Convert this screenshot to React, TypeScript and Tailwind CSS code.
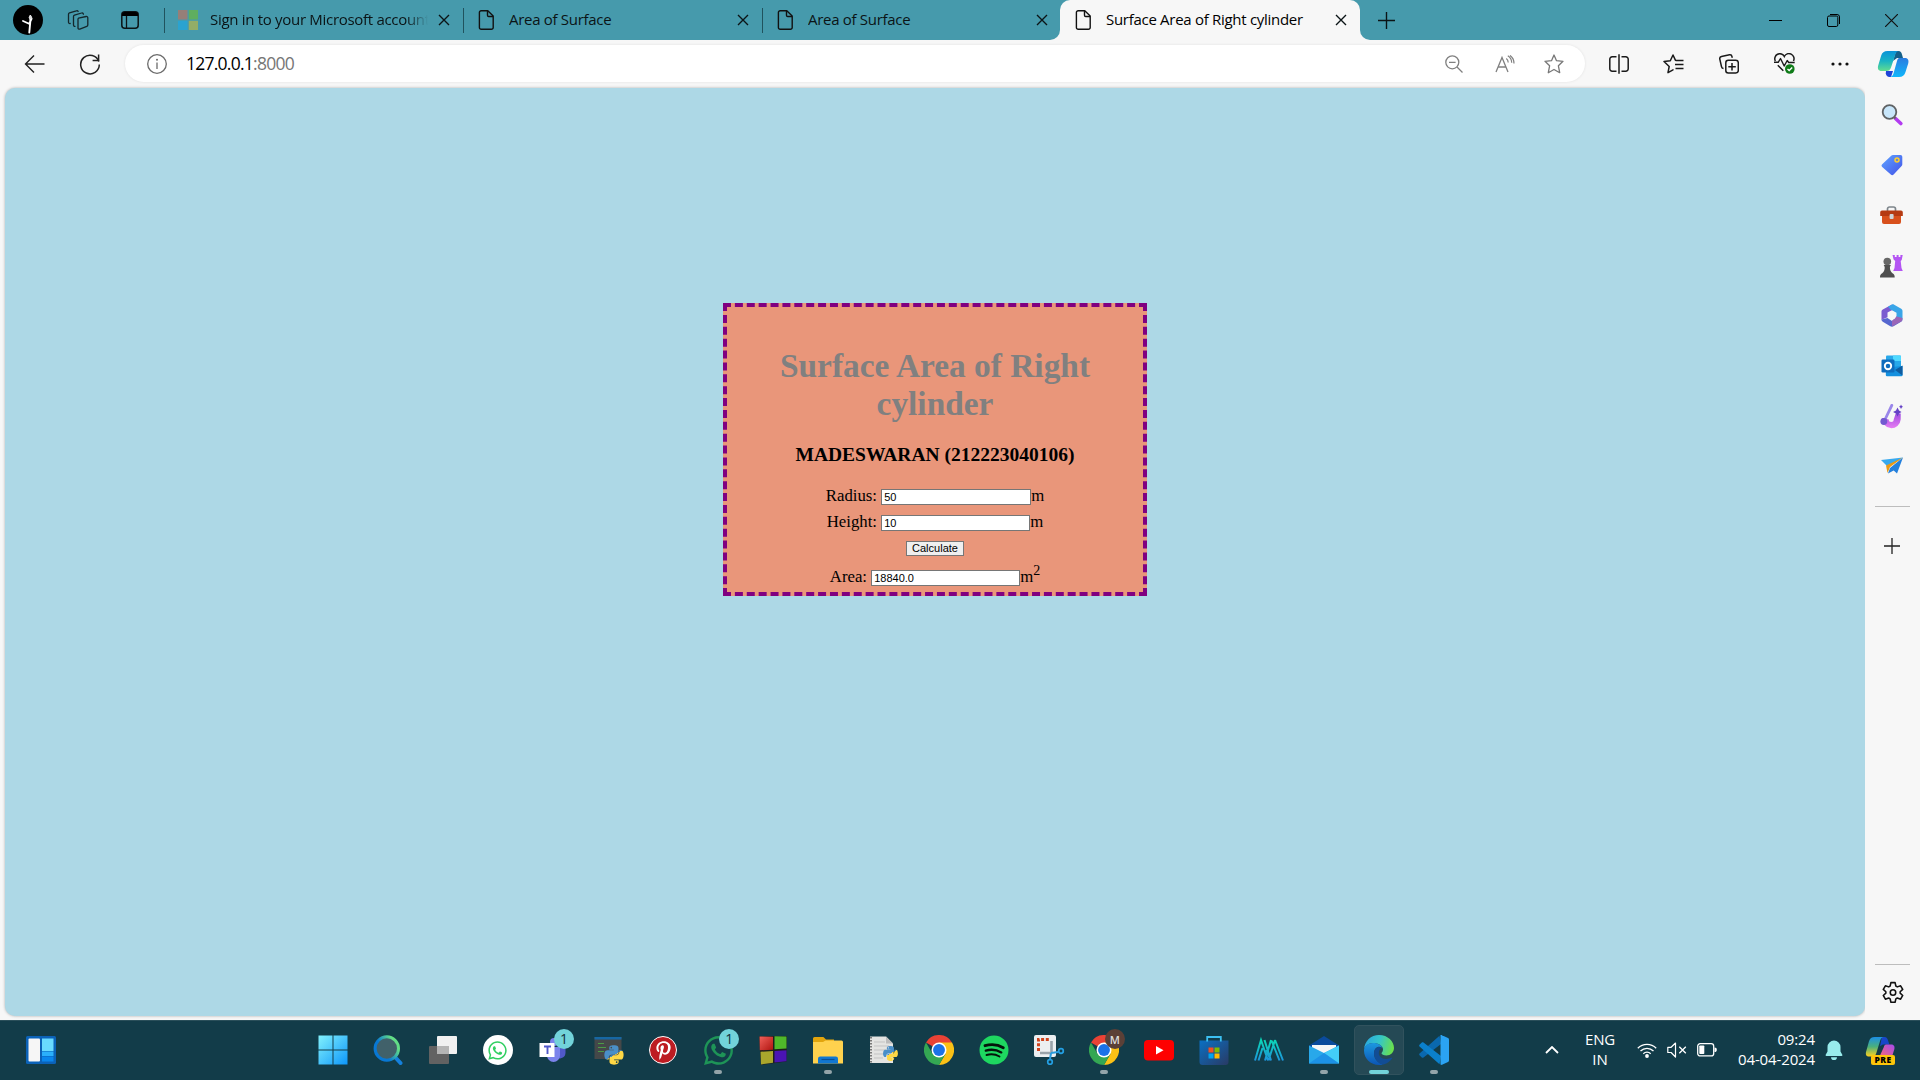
import React from "react";
import { FaWhatsapp, FaPython, FaPinterestP } from "react-icons/fa";

type SvgProps = { w?: number; h?: number; vb: string; children: React.ReactNode; className?: string };

function Svg({ w = 30, h = 30, vb, children, className }: SvgProps) {
  return (
    <svg width={w} height={h} viewBox={vb} fill="none" className={className ?? "block shrink-0"}>
      {children}
    </svg>
  );
}

/* ---------- browser chrome icons ---------- */

const Close = () => (
  <Svg w={12} h={12} vb="0 0 12 12">
    <path d="M1 1 11 11M11 1 1 11" stroke="#0b1416" strokeWidth="1.4" />
  </Svg>
);

const Doc = () => (
  <Svg w={20} h={20} vb="0 0 20 20">
    <path
      d="M4.2.8h6.6L16.2 6v11.4a1.8 1.8 0 0 1-1.8 1.8H4.2a1.8 1.8 0 0 1-1.8-1.8V2.6A1.8 1.8 0 0 1 4.2.8Z"
      stroke="#111"
      strokeWidth="1.4"
      strokeLinejoin="round"
    />
    <path d="M10.5 1v4.3a1.2 1.2 0 0 0 1.2 1.2H16" stroke="#111" strokeWidth="1.4" />
  </Svg>
);

const MsLogo = () => (
  <Svg w={20} h={20} vb="0 0 20 20">
    <path fill="#967f78" d="M0 0h9.5v9.5H0z" />
    <path fill="#5fae5f" d="M10.8 0h9.2v9.5h-9.2z" />
    <path fill="#2aa3d0" d="M0 10.8h9.5V20H0z" />
    <path fill="#93ad67" d="M10.8 10.8h9.2V20h-9.2z" />
  </Svg>
);

const Profile = () => (
  <Svg vb="0 0 30 30">
    <circle cx="15" cy="15" r="15" fill="#000" />
    <path d="M17.3 11v5.5l-1 11M16.6 19l-6.6-3M16.6 18l2-4.500" stroke="#fff" strokeWidth="1.9" strokeLinecap="round" />
    <circle cx="17.400" cy="12.500" r="1.700" fill="#ddd" />
  </Svg>
);

const Workspaces = () => (
  <Svg w={22} h={20} vb="0 0 22 20">
    <g stroke="#14272c" strokeWidth="1.3" strokeLinejoin="round" strokeLinecap="round">
      <path d="m11.500 8.200 7.700-1.700a1.300 1.300 0 0 1 1.600 1.200v7.300a1.500 1.500 0 0 1-1 1.400l-7 2.700a1.300 1.300 0 0 1-1.800-1.200V9.700a1.500 1.500 0 0 1 .5-1.500Z" />
      <path d="M8 16.400a1.400 1.400 0 0 1-1.500-1.500V6.600a1.500 1.500 0 0 1 1-1.400L14.500 3a1.400 1.400 0 0 1 1.900 1.200" />
      <path d="M3.200 13.500a1.400 1.400 0 0 1-1.700-1.400V4.200a1.500 1.500 0 0 1 1-1.400L9.400.8a1.400 1.400 0 0 1 1.700.6" />
    </g>
  </Svg>
);

const TabActions = () => (
  <Svg w={18} h={18} vb="0 0 18 18">
    <rect x=".8" y=".8" width="16.400" height="16.400" rx="3" stroke="#0b1416" strokeWidth="1.500" />
    <path d="M1 3.500A2.500 2.500 0 0 1 3.500 1h11A2.500 2.500 0 0 1 17 3.500V5H1Z" fill="#000" />
    <path d="M5.500 5v12" stroke="#0b1416" strokeWidth="1.300" />
  </Svg>
);

const Back = () => (
  <Svg w={22} h={20} vb="0 0 22 20">
    <path d="M20.500 10H1.500M10 1.500 1.500 10l8.500 8.500" stroke="#222" strokeWidth="1.400" />
  </Svg>
);

const Refresh = () => (
  <Svg w={22} h={22} vb="0 0 22 22">
    <path d="M19.800 8.500A9.300 9.300 0 1 0 20.300 11.500" stroke="#222" strokeWidth="1.500" />
    <path d="M19.600 1.500v6h-6" stroke="#222" strokeWidth="1.500" />
  </Svg>
);

const Info = () => (
  <Svg w={20} h={20} vb="0 0 20 20">
    <circle cx="10" cy="10" r="9.300" stroke="#6b6b6b" strokeWidth="1.300" />
    <path d="M10 8.500V15" stroke="#6b6b6b" strokeWidth="1.300" />
    <circle cx="10" cy="5.800" r="1" fill="#6b6b6b" />
  </Svg>
);

const ZoomOut = () => (
  <Svg w={18} h={18} vb="0 0 18 18">
    <circle cx="7.300" cy="7.300" r="6.500" stroke="#808080" strokeWidth="1.300" />
    <path d="m12 12 5.500 5.500M4 7.300h6.600" stroke="#808080" strokeWidth="1.300" />
  </Svg>
);

const ReadAloud = () => (
  <Svg w={20} h={18} vb="0 0 20 18">
    <path d="M1 17 7 2.500 13 17M3.200 12h7.600" stroke="#808080" strokeWidth="1.300" />
    <path d="M11.300 3.500c1.300 1 1.900 2.300 1.900 4M12.800.8c2.600 1.600 3.900 4 3.900 7M15 .4c2.500 1.800 4 4.600 4 8" stroke="#808080" strokeWidth="1.200" />
  </Svg>
);

const Star = () => (
  <Svg w={20} h={20} vb="0 0 20 20">
    <path
      d="m10 1 2.500 5.700 6.500.6-4.600 4.500 1.300 6.900L10 15.500l-5.700 3.200 1.300-6.900L1 7.300l6.500-.6Z"
      stroke="#777"
      strokeWidth="1.300"
      strokeLinejoin="round"
    />
  </Svg>
);

const Split = () => (
  <Svg w={20} h={20} vb="0 0 20 20">
    <path
      d="M7.500 2.800H3.200A2.400 2.400 0 0 0 .8 5.200v9.600a2.400 2.400 0 0 0 2.400 2.400h4.300M12.500 2.800h4.300a2.400 2.400 0 0 1 2.400 2.400v9.600a2.400 2.400 0 0 1-2.400 2.400h-4.300M10 .3v19.400"
      stroke="#1a1a1a"
      strokeWidth="1.500"
    />
  </Svg>
);

const Favorites = () => (
  <Svg w={21} h={20} vb="0 0 21 20">
    <path
      d="M10 15.800 5 18.700l1.200-6.200L1 7.500l6.300-.8L10 1l2.500 5.400"
      stroke="#1a1a1a"
      strokeWidth="1.500"
      strokeLinejoin="round"
      strokeLinecap="round"
    />
    <path d="M13 6.500h7.500M12 10.500h8.500M12.500 14.500h8" stroke="#1a1a1a" strokeWidth="1.500" />
  </Svg>
);

const Collections = () => (
  <Svg w={20} h={20} vb="0 0 20 20">
    <rect x="6.800" y="6.300" width="12.500" height="12.800" rx="2.500" stroke="#1a1a1a" strokeWidth="1.500" />
    <path d="M13 9v7.500M9.300 12.800h7.500" stroke="#1a1a1a" strokeWidth="1.500" />
    <path
      d="M4.500 14.500a2.300 2.300 0 0 1-2-1.900L.8 5.200a2.200 2.200 0 0 1 1.700-2.600L10.500.8A2.200 2.200 0 0 1 13 2.600l.3 1.200"
      stroke="#1a1a1a"
      strokeWidth="1.500"
    />
  </Svg>
);

const Essentials = () => (
  <Svg w={21} h={21} vb="0 0 21 21">
    <path d="M1.300 8A5 5 0 0 1 10.300 3.500 5 5 0 0 1 19.500 8M3.800 12.300l5.500 5.500" stroke="#1a1a1a" strokeWidth="1.500" />
    <path d="M0 9.300h4.200L6.500 5.500l3.700 7.500 3-5.500 1.500 2h6" stroke="#1a1a1a" strokeWidth="1.400" strokeLinejoin="round" />
    <circle cx="15.800" cy="16" r="4.800" fill="#0f7b18" />
    <path d="m13.500 16 1.700 1.600 3-3" stroke="#fff" strokeWidth="1.400" />
  </Svg>
);

const Copilot = () => (
  <Svg w={32} h={28} vb="0 0 32 28">
    <defs>
      <linearGradient id="cpA" x1="0" y1="0" x2="0" y2="1">
        <stop offset="0" stopColor="#0a93d8" />
        <stop offset=".5" stopColor="#19b3c4" />
        <stop offset="1" stopColor="#62dd90" />
      </linearGradient>
      <linearGradient id="cpB" x1="0" y1="0" x2="0" y2="1">
        <stop offset="0" stopColor="#2a7ce0" />
        <stop offset="1" stopColor="#10b7fb" />
      </linearGradient>
    </defs>
    <path d="M19 1h2.500c2 0 3 1.500 3.500 3.500L26 8h-6l-4 3Z" fill="#15608a" />
    <path d="M9 21h7l-2 6h-1.500c-2.200 0-3.200-1.500-3.700-3.500Z" fill="#1f45d8" />
    <path d="M10.500 1H22c-2 0-3 1.500-3.700 3.500L14 17.500c-.8 2.400-2.200 3.500-4.500 3.500H4.800C1 21 .4 18.500 1.200 15.500l3-10C5.200 2.500 7 1 10.500 1Z" fill="url(#cpA)" />
    <path d="M22.500 8H28c3.200 0 4 2.500 3.200 5.500l-2.700 8.500c-1 3.300-3 5-6.500 5h-9.500c2.200 0 3.300-1.300 4-3.500L20 11c.5-2 1.200-3 2.500-3Z" fill="url(#cpB)" />
  </Svg>
);

/* ---------- sidebar icons ---------- */

const SideSearch = () => (
  <Svg w={22} h={22} vb="0 0 22 22">
    <path d="m14.500 14.500 5.300 5" stroke="#b23bf0" strokeWidth="3.600" strokeLinecap="round" />
    <path d="m12.500 12.500 2 2" stroke="#666" strokeWidth="2" />
    <circle cx="8.500" cy="8" r="6.800" fill="#c8e6fa" stroke="#5f6264" strokeWidth="1.800" />
  </Svg>
);

const SideTag = () => (
  <Svg w={22} h={22} vb="0 0 22 22">
    <defs>
      <linearGradient id="tag" x1="0" y1="0" x2="1" y2="1">
        <stop offset="0" stopColor="#5fa5ff" />
        <stop offset="1" stopColor="#4352e8" />
      </linearGradient>
    </defs>
    <path d="M12 1h7.500a1.800 1.800 0 0 1 1.800 1.800v7.500c0 .7-.2 1.200-.7 1.700l-8 8.500a2 2 0 0 1-2.800 0L1.200 13a2 2 0 0 1 0-2.800l9-8.500C10.700 1.200 11.300 1 12 1Z" fill="url(#tag)" />
    <circle cx="16" cy="6" r="2" fill="#6f8ac8" stroke="#ffcf2e" strokeWidth="1.500" />
  </Svg>
);

const SideTools = () => (
  <Svg w={23} h={18} vb="0 0 23 18">
    <path d="M7.500 5V3a2 2 0 0 1 2-2h4a2 2 0 0 1 2 2v2" stroke="#7d858b" strokeWidth="1.700" />
    <path d="M2 9h19v7a2 2 0 0 1-2 2H4a2 2 0 0 1-2-2Z" fill="#d8501c" />
    <path d="M2 4.500h19a1.800 1.800 0 0 1 1.800 1.800V10H.2V6.300A1.800 1.800 0 0 1 2 4.500Z" fill="#b53a12" />
    <rect x="9.600" y="8" width="4" height="5" rx="1" fill="#cfd5d9" />
  </Svg>
);

const SideGames = () => (
  <Svg w={23} h={24} vb="0 0 23 24">
    <path d="M12.500 1h2.300v2h1.800V1h2v2h1.800V1h2.300l-1 5-1 1 .8 7 1.300 3h-9.600l1.300-3 .7-7-1.600-1.500Z" fill="#b455f3" />
    <circle cx="7.300" cy="7.500" r="3.800" fill="#676767" />
    <path d="M3.700 11h7.200l-1 2c0 3 .6 4.500 2.600 6.200 1.800.8 2.200 2.200 2.200 4.300H0c0-2.100.4-3.500 2.200-4.300 2-1.700 2.500-3.200 2.500-6.200Z" fill="#4f4f4f" />
  </Svg>
);

const SideM365 = () => (
  <Svg w={22} h={23} vb="0 0 22 23">
    <path d="M11 .5 1.800 5.500C.8 6 .5 6.800.5 7.800v8l6-2.500V8.500L16 3.500Z" fill="#7b5bd0" />
    <path d="M11 .5c.8-.3 1.500-.2 2.200.2l7 4c.8.5 1.300 1.200 1.300 2.200v8.600L15.500 13V8.700L9.500 5.500 7 2.800Z" fill="#39a5e8" />
    <path d="M.5 15.500c0 1 .5 1.700 1.300 2.200l7.500 4.500c1 .6 2.200.6 3.200 0l8-4.700c.6-.4 1-1.100 1-2L15.500 12.500 11 17l-4.500-3Z" fill="#5667cf" />
    <path d="m21.500 14-6-1.500L11 17v5.500l9-5.100c1-.6 1.500-1.400 1.500-3.400Z" fill="#9a66b8" />
    <circle cx="11" cy="11.400" r="3.900" fill="#f7f7f7" />
  </Svg>
);

const SideOutlook = () => (
  <Svg w={22} h={22} vb="0 0 22 22">
    <path d="M5 1.500A1 1 0 0 1 6 .5h13a1 1 0 0 1 1 1V12H5Z" fill="#28a8ea" />
    <path d="M12 .5h7a1 1 0 0 1 1 1V6h-8Z" fill="#50d9ff" />
    <path d="M5 12.500 21.500 11v9a1.200 1.200 0 0 1-1.200 1.200H6a1.200 1.200 0 0 1-1.200-1.200Z" fill="#1490df" />
    <path d="m14 15 7.500-4.500v10Z" fill="#0f5c9f" />
    <rect x=".5" y="4.500" width="13" height="13" rx="1.300" fill="#0f6cbd" />
    <circle cx="7" cy="11" r="3.200" stroke="#fff" strokeWidth="1.900" />
  </Svg>
);

const SideDesigner = () => (
  <Svg w={23} h={25} vb="0 0 23 25">
    <defs>
      <linearGradient id="dsg" x1="0" y1="0" x2="0" y2="1">
        <stop offset="0" stopColor="#a04ee0" />
        <stop offset="1" stopColor="#e67cf3" />
      </linearGradient>
    </defs>
    <path d="M2 14a9.300 9.300 0 0 0 18.700 1.500V9.500h-5L13.700 15.500a2.500 2.500 0 0 1-5 0Z" fill="url(#dsg)" />
    <path d="M11.800 1.300 4.800 16" stroke="#9a86ea" strokeWidth="2.800" strokeLinecap="round" />
    <circle cx="3.800" cy="17.500" r="3.400" fill="#7359d0" />
    <path d="m17.500 3.500 1.500 3 2.500 1.500-2.500 1.500-1.500 3-1.500-3L13 8l3-1.500ZM21 .5l.8 1.500 1.200.8-1.200.7L21 5l-.7-1.500-1.300-.7 1.300-.8Z" fill="#6541c6" />
  </Svg>
);

const SideDrop = () => (
  <Svg w={22} h={18} vb="0 0 22 18">
    <path d="M0 3 22 .5 7 10Z" fill="#38a9ee" />
    <path d="M5 8.500 22 .5 9 10l-2.500 6Z" fill="#e99a16" />
    <path d="M9 11 22 .5 16 16.500l-3.300-3L7 16.500Z" fill="#2480dd" />
  </Svg>
);

const Plus = ({ size = 16, color = "#222" }: { size?: number; color?: string }) => (
  <Svg w={size} h={size} vb="0 0 16 16">
    <path d="M8 0v16M0 8h16" stroke={color} strokeWidth="1.300" />
  </Svg>
);

const Gear = () => (
  <Svg w={22} h={22} vb="0 0 24 24">
    <path
      d="M9.700 1.800h4.600l.8 3.700 1.600.9 3.600-1.200 2.300 4-2.800 2.500v1.600l2.800 2.500-2.300 4-3.600-1.200-1.600.9-.8 3.700H9.700l-.8-3.700-1.600-.9-3.600 1.200-2.300-4 2.800-2.500v-1.600L1.400 9.200l2.300-4 3.600 1.200 1.600-.9Z"
      stroke="#111"
      strokeWidth="1.700"
      strokeLinejoin="round"
    />
    <circle cx="12" cy="12.500" r="3" stroke="#111" strokeWidth="1.700" />
  </Svg>
);

/* ---------- taskbar icons ---------- */

const Widgets = () => (
  <Svg w={30} h={28} vb="0 0 30 28">
    <rect width="30" height="28" rx="1.500" fill="#0b62b8" />
    <rect x="2.500" y="2.500" width="11.500" height="23" rx="1" fill="#f6f6f6" />
    <path d="M16 2.500h11.500V15H16z" fill="#69dafe" />
    <path d="M16 15.500h11.500V20H16z" fill="#2bb0fb" />
    <path d="M16 20.500h11.500v5H16z" fill="#0a86ec" />
  </Svg>
);

const Start = () => (
  <Svg vb="0 0 30 30">
    <defs>
      <linearGradient id="win" gradientUnits="userSpaceOnUse" x1="0" y1="0" x2="30" y2="30">
        <stop offset="0" stopColor="#84f3fd" />
        <stop offset="1" stopColor="#0b95fa" />
      </linearGradient>
    </defs>
    <path d="M.5.500h14v14H.5zM15.500.5h14v14h-14zM.5 15.500h14v14H.5zM15.500 15.500h14v14h-14z" fill="url(#win)" />
  </Svg>
);

const TaskSearch = () => (
  <Svg vb="0 0 30 30">
    <defs>
      <linearGradient id="srch" x1=".1" y1=".7" x2=".9" y2=".2">
        <stop offset=".3" stopColor="#0878d4" />
        <stop offset=".9" stopColor="#62dd86" />
      </linearGradient>
    </defs>
    <path d="m21.500 21.500 6 6.500" stroke="#1580dc" strokeWidth="4" strokeLinecap="round" />
    <circle cx="13.800" cy="13.500" r="11.700" fill="#41616a" stroke="url(#srch)" strokeWidth="3" />
  </Svg>
);

const TaskView = () => (
  <Svg w={28} h={28} vb="0 0 28 28">
    <rect y="10" width="20" height="18" rx="1" fill="#626262" />
    <rect x="8" width="20" height="18" rx="1" fill="#f1f1f1" />
    <path d="M8 10h12v8H8z" fill="#b5b5b5" />
  </Svg>
);

const WhatsAppRound = () => (
  <span className="flex h-[30px] w-[30px] items-center justify-center rounded-full bg-white">
    <FaWhatsapp size={21} color="#32cf62" />
  </span>
);

const Badge = ({ children, dark }: { children: React.ReactNode; dark?: boolean }) => (
  <span
    className={
      dark
        ? "absolute -top-[6px] left-[16px] flex h-5 w-5 items-center justify-center rounded-full bg-[#5b4037] text-[11px] font-semibold leading-none text-[#ddd]"
        : "absolute -top-[6px] left-[16px] flex h-5 w-5 items-center justify-center rounded-full bg-[#72d3da] text-[14px] leading-none text-[#12303a]"
    }
  >
    {children}
  </span>
);

const Teams = () => (
  <span className="relative">
    <Svg vb="0 0 30 30">
      <circle cx="16" cy="7" r="4" fill="#7b83eb" />
      <path d="M17 12h10.500v6a5.500 5.500 0 0 1-8 4.800Z" fill="#5059c9" />
      <path d="M8 12h14v8.500a6.500 6.500 0 0 1-13 0Z" fill="#7b83eb" />
      <rect x="1.500" y="8" width="15" height="14" fill="#fff" />
      <path d="M6 11.500h7M9.500 11.500v7.500" stroke="#5059c9" strokeWidth="1.900" />
    </Svg>
    <Badge>1</Badge>
  </span>
);

const PyTerminal = () => (
  <span className="relative">
    <Svg vb="0 0 30 30">
      <path d="M1.500 2h27v22h-27z" fill="#454849" />
      <path d="M1.500 2h27v2.500h-27z" fill="#1667a3" />
      <path d="M5 8.500h6M5 12.500h8M5 16.500h6" stroke="#4b9b46" strokeWidth="1" />
    </Svg>
    <FaPython size={22} fill="url(#py)" className="absolute left-[10px] top-[9px]" />
  </span>
);

const Pinterest = () => (
  <span className="flex h-[28px] w-[28px] items-center justify-center rounded-full border-[1.5px] border-white bg-[#bd1c22]">
    <FaPinterestP size={19} color="#fff" />
  </span>
);

const WhatsAppApp = () => (
  <span className="relative">
    <FaWhatsapp size={33} color="#1e9457" className="-m-[1.500px]" />
    <Badge>1</Badge>
  </span>
);

const FourColors = () => (
  <Svg vb="0 0 30 30">
    <defs>
      <linearGradient id="redq" x1="0" y1="0" x2="1" y2="1">
        <stop offset="0" stopColor="#f0605a" />
        <stop offset="1" stopColor="#b01410" />
      </linearGradient>
    </defs>
    <path d="M1 1.300 29 1l-.5 25.500L3 30Z" fill="#1c1f1c" />
    <path d="m1.500 1.500 13.500.3v13l-13.200.4Z" fill="url(#redq)" />
    <path d="m16.500 1.300 12 .3v12l-12 .6Z" fill="#4fb82a" />
    <path d="m2.500 16.700 12.500-.6v11.700L3 29.500Z" fill="#a9a62c" />
    <path d="m16.500 16 12-.8v11l-12 1.300Z" fill="#4a14b4" />
  </Svg>
);

const Folder = () => (
  <Svg vb="0 0 30 30">
    <path d="M0 3.500A1.500 1.500 0 0 1 1.500 2h8c1 0 1.500.5 2.200 1.200L13 4.500h8V10H0Z" fill="#e2a50d" />
    <path d="M0 7h10l2.500-1.500h16A1.500 1.500 0 0 1 30 7v21.500H0Z" fill="#ffd24e" />
    <path d="M5 28.500v-4.800A2.200 2.200 0 0 1 7.200 21.500h15.600a2.200 2.200 0 0 1 2.200 2.200v4.800Z" fill="#1177d1" />
    <path d="M8.500 24.500h13" stroke="#0a4f94" strokeWidth="1.200" />
  </Svg>
);

const PyIdle = () => (
  <span className="relative">
    <Svg vb="0 0 30 30">
      <path d="M2 1.500h16l7 7V28H2Z" fill="#e4e4e2" />
      <path d="M18 1.500v7h7Z" fill="#bcbcbc" />
      <path d="M3 2v26" stroke="#555" strokeWidth="1.500" strokeDasharray="1.500 1.500" />
      <path d="M6 7h11M6 11h15M6 15h12M6 19h10M6 23h9" stroke="#c3c3c3" strokeWidth="1" />
    </Svg>
    <FaPython size={17} fill="url(#py)" className="absolute left-[14px] top-[10px]" />
  </span>
);

const Chrome = () => (
  <Svg vb="0 0 48 48">
    <path d="M24 24 3.200 12A24 24 0 0 1 44.800 12Z" fill="#e94235" />
    <path d="M24 24V12h20.800A24 24 0 0 1 24 48l10.400-18Z" fill="#fbc116" />
    <path d="m24 24 10.400 6L24 48A24 24 0 0 1 3.200 12l10.400 18Z" fill="#34a753" />
    <circle cx="24" cy="24" r="12" fill="#fff" />
    <circle cx="24" cy="24" r="9.500" fill="#1c72e8" />
  </Svg>
);

const ChromeProfile = () => (
  <span className="relative">
    <Chrome />
    <Badge dark>M</Badge>
  </span>
);

const Spotify = () => (
  <Svg vb="0 0 30 30">
    <circle cx="15" cy="15" r="14.500" fill="#1ed760" />
    <path d="M6 10.700c6-1.600 13-1.100 18.300 2" stroke="#04140a" strokeWidth="2.800" strokeLinecap="round" />
    <path d="M6.800 15.600c5.300-1.500 11-.8 15.500 1.800" stroke="#04140a" strokeWidth="2.300" strokeLinecap="round" />
    <path d="M7.500 20c4.500-1.200 9.200-.7 13 1.500" stroke="#04140a" strokeWidth="1.900" strokeLinecap="round" />
  </Svg>
);

const Snip = () => (
  <Svg w={32} vb="0 0 32 30">
    <rect x="1" width="22" height="22" rx="2" fill="#eceff1" />
    <path d="M5.500 16V4.500H17" stroke="#d0421b" strokeWidth="3" strokeDasharray="3 1.700" />
    <path d="M18.500 6v12M7 18h12" stroke="#9aa3aa" strokeWidth="2.600" />
    <path d="m18 18-1 6M18 18l7-1" stroke="#2a9bdc" strokeWidth="2" />
    <circle cx="17" cy="27" r="2.300" stroke="#24a0e4" strokeWidth="1.700" />
    <circle cx="28" cy="16" r="2.300" stroke="#24a0e4" strokeWidth="1.700" />
  </Svg>
);

const YouTube = () => (
  <Svg vb="0 0 30 30">
    <rect y="5" width="30" height="20.500" rx="4" fill="#fe0000" />
    <path d="m12 11 7.500 4.200L12 19.500Z" fill="#fff" />
  </Svg>
);

const Store = () => (
  <Svg vb="0 0 30 30">
    <defs>
      <linearGradient id="store" x1="0" y1="0" x2="1" y2="1">
        <stop offset="0" stopColor="#0a70c4" />
        <stop offset="1" stopColor="#293a64" />
      </linearGradient>
    </defs>
    <path d="M.5 5.500h29V27a3 3 0 0 1-3 3h-23a3 3 0 0 1-3-3Z" fill="url(#store)" />
    <path d="M8.200 6.500V2h13.600v4.500" stroke="#3cc0f2" strokeWidth="1.800" />
    <path fill="#f25022" d="M9.500 12.500h5v5h-5z" />
    <path fill="#7fba00" d="M15.500 12.500h5v5h-5z" />
    <path fill="#00a4ef" d="M9.500 18.500h5v5h-5z" />
    <path fill="#ffb900" d="M15.500 18.500h5v5h-5z" />
  </Svg>
);

const DoubleM = () => (
  <Svg vb="0 0 30 30">
    <defs>
      <linearGradient id="mm" gradientUnits="userSpaceOnUse" x1="0" y1="5" x2="0" y2="26">
        <stop offset="0" stopColor="#0bd6b6" />
        <stop offset="1" stopColor="#1d93dc" />
      </linearGradient>
    </defs>
    <g stroke="url(#mm)" strokeWidth="2">
      <path d="M1 25.500 7 5l7 20.500M4.500 25.500 8.500 13M10.500 5l6.500 20.500M11 25.500 17 5M14.500 25.500 21 5M21 5l8 20.500M17.500 5.500l8 20M16 24l-3.500-9" />
    </g>
  </Svg>
);

const Mail = () => (
  <Svg vb="0 0 30 30">
    <path d="M0 10.500 15 1l15 9.500V20H0Z" fill="#0b4b9c" />
    <path d="M3 10h24v10H3z" fill="#f6f6f6" />
    <path d="M0 10.500 15 18l15-7.500v18H0Z" fill="#28a8ea" />
    <path d="m15 18 15-7.500v18Z" fill="#43cdf8" />
    <path d="M0 28.500 15 18l15 10.500Z" fill="#1c92e6" />
  </Svg>
);

const Edge = () => (
  <Svg vb="0 0 30 30">
    <defs>
      <linearGradient id="eg1" x1="0" y1=".3" x2="1" y2=".5">
        <stop offset="0" stopColor="#2aa7e0" />
        <stop offset=".5" stopColor="#35c6c8" />
        <stop offset="1" stopColor="#6be04a" />
      </linearGradient>
      <linearGradient id="eg2" x1="0" y1="0" x2="0" y2="1">
        <stop offset="0" stopColor="#1c98e0" />
        <stop offset="1" stopColor="#0c55b4" />
      </linearGradient>
    </defs>
    <path d="M0 14.500C.5 6 7 0 15 0c9 0 15 6.500 15 13 0 4.500-3.500 7.500-7.500 7.500-3 0-5-1-5-2.200 0-.8 1.500-1.300 1.500-4C19 10.500 14 8 9.500 8 4 8 .5 11.500 0 14.500Z" fill="url(#eg1)" />
    <path d="M0 15.500C0 11 4 8 9 8c4.500 0 8.500 2 9.500 5-4-3-8.500 0-8.500 5.500 0 5.500 4 9 9 11.200-1.300.3-2.600.3-4 .3C6.500 30 0 23.500 0 15.500Z" fill="url(#eg2)" />
    <path d="M18 13c-4-2.500-8 .5-8 5.500 0 6 5 11 9.500 11 4-1 7-3.500 8.500-6 .3-.6-.3-1-.8-.7-1.500.7-3 1.200-5 1.200-5 0-8.200-3.500-7.200-7.500.4-1.700 1.500-3 3-3.500Z" fill="#124d95" />
  </Svg>
);

const VsCode = () => (
  <Svg vb="0 0 30 30">
    <path d="M22 9 4.500 22.500c-.6.500-1.300.4-1.700 0L.5 20.300c-.5-.5-.5-1.200 0-1.700L20.500.8Z" fill="#0a68ae" />
    <path d="M22 21 4.500 7.500c-.6-.5-1.300-.4-1.700 0L.5 9.700c-.5.5-.5 1.200 0 1.700l20 17.800Z" fill="#0b80cb" />
    <path d="M21.500.4c.5-.4 1-.4 1.500-.2l6 2.900c.6.300 1 1 1 1.700v20.400c0 .7-.4 1.400-1 1.700l-6 2.900c-.5.200-1 .2-1.500-.2Z" fill="#2ba3f3" />
  </Svg>
);

type App = { icon: React.ReactNode; name: string; state?: "open" | "active" };

const apps: App[] = [
  { name: "start", icon: <Start /> },
  { name: "search", icon: <TaskSearch /> },
  { name: "taskview", icon: <TaskView /> },
  { name: "wa-web", icon: <WhatsAppRound /> },
  { name: "teams", icon: <Teams /> },
  { name: "py", icon: <PyTerminal /> },
  { name: "pin", icon: <Pinterest /> },
  { name: "wa", icon: <WhatsAppApp />, state: "open" },
  { name: "colors", icon: <FourColors /> },
  { name: "files", icon: <Folder />, state: "open" },
  { name: "idle", icon: <PyIdle /> },
  { name: "chrome", icon: <Chrome /> },
  { name: "spotify", icon: <Spotify /> },
  { name: "snip", icon: <Snip /> },
  { name: "chrome-m", icon: <ChromeProfile />, state: "open" },
  { name: "yt", icon: <YouTube /> },
  { name: "store", icon: <Store /> },
  { name: "mm", icon: <DoubleM /> },
  { name: "mail", icon: <Mail />, state: "open" },
  { name: "edge", icon: <Edge />, state: "active" },
  { name: "code", icon: <VsCode />, state: "open" },
];

/* ---------- layout ---------- */

function Tab({ title, icon, fade }: { title: string; icon: React.ReactNode; fade?: boolean }) {
  return (
    <div className="flex h-10 w-[299px] shrink-0 items-center">
      <div className="h-[25px] w-px bg-[#20535e]" />
      <div className="ml-[13px]">{icon}</div>
      <div
        className={
          fade
            ? "mb-px ml-3 w-[218px] overflow-hidden whitespace-nowrap text-[15px] tracking-[-0.3px] [mask-image:linear-gradient(to_right,black_90%,transparent)]"
            : "mb-px ml-3 w-[218px] overflow-hidden whitespace-nowrap text-[15px] tracking-[-0.3px]"
        }
      >
        {title}
      </div>
      <div className="ml-[10px]">
        <Close />
      </div>
    </div>
  );
}

function TabStrip() {
  return (
    <div className="flex h-10 items-center bg-[#469aac] text-[#0b1416]">
      <div className="flex h-10 w-[164px] shrink-0 items-center pl-[13px]">
        <Profile />
        <div className="ml-[24px]">
          <Workspaces />
        </div>
        <div className="ml-[32px]">
          <TabActions />
        </div>
      </div>
      <Tab title="Sign in to your Microsoft account" icon={<MsLogo />} fade />
      <Tab title="Area of Surface" icon={<Doc />} />
      <Tab title="Area of Surface" icon={<Doc />} />
      <div className="-ml-[11px] h-10 w-[10px] shrink-0 bg-[#f7f7f7]">
        <div className="h-10 rounded-br-[10px] bg-[#469aac]" />
      </div>
      <div className="h-10 w-[300px] shrink-0 bg-[#469aac]">
        <div className="flex h-10 items-center rounded-t-[10px] bg-[#f7f7f7] text-black">
          <div className="ml-[14px]">
            <Doc />
          </div>
          <div className="mb-px ml-3 w-[219px] whitespace-nowrap text-[15px] tracking-[-0.29px]">Surface Area of Right cylinder</div>
          <div className="ml-[10px]">
            <Close />
          </div>
        </div>
      </div>
      <div className="h-10 w-[10px] shrink-0 bg-[#f7f7f7]">
        <div className="h-10 rounded-bl-[10px] bg-[#469aac]" />
      </div>
      <div className="ml-[8px]">
        <Plus size={17} color="#0b1416" />
      </div>
      <div className="ml-auto flex items-center">
        <div className="flex w-[57px] justify-center">
          <div className="h-px w-[13px] bg-black" />
        </div>
        <div className="flex w-[58px] justify-center">
          <Svg w={13} h={13} vb="0 0 13 13">
            <rect x=".5" y="2" width="10.300" height="10.500" rx="1.500" stroke="#000" strokeWidth="1" />
            <path d="M3 .5h7A2.500 2.500 0 0 1 12.500 3v7" stroke="#000" strokeWidth="1" />
          </Svg>
        </div>
        <div className="flex w-[58px] justify-center">
          <Svg w={13} h={13} vb="0 0 13 13">
            <path d="m0 0 13 13M13 0 0 13" stroke="#111" strokeWidth="1.200" />
          </Svg>
        </div>
      </div>
    </div>
  );
}

function Toolbar() {
  return (
    <div className="flex h-12 items-center pb-px">
      <div className="flex w-[125px] shrink-0 items-center pl-6">
        <Back />
        <div className="ml-[33px]">
          <Refresh />
        </div>
      </div>
      <div className="flex h-[37px] w-[1460px] shrink-0 items-center rounded-full bg-white pl-[22px] shadow-[0_0_3px_rgba(0,0,0,0.09)]">
        <Info />
        <div className="ml-[19px] text-[17.500px] leading-none tracking-[-0.75px] text-black">
          127.0.0.1<span className="text-[#767676]">:8000</span>
        </div>
        <div className="ml-auto flex items-center pr-[21px]">
          <ZoomOut />
          <div className="ml-[32px]">
            <ReadAloud />
          </div>
          <div className="ml-[29px]">
            <Star />
          </div>
        </div>
      </div>
      <div className="flex items-center pl-[6px] [&>div]:flex [&>div]:w-[55.300px] [&>div]:justify-center">
        <div>
          <Split />
        </div>
        <div>
          <Favorites />
        </div>
        <div>
          <Collections />
        </div>
        <div>
          <Essentials />
        </div>
        <div>
          <Svg w={18} h={4} vb="0 0 18 4">
            <circle cx="2" cy="2" r="1.600" fill="#111" />
            <circle cx="9" cy="2" r="1.600" fill="#111" />
            <circle cx="16" cy="2" r="1.600" fill="#111" />
          </Svg>
        </div>
      </div>
    </div>
  );
}

function Field({ label, value, width }: { label: string; value: string; width: string }) {
  return (
    <>
      <label className="whitespace-pre">{label + " "}</label>
      <input
        readOnly
        value={value}
        className={
          "mt-[3px] h-[15.500px] border border-[#767676] bg-white px-[2px] py-0 font-['Liberation_Sans'] text-[11px] leading-[13px] text-black outline-none " +
          width
        }
      />
      <span>m</span>
    </>
  );
}

function Card() {
  return (
    <div className="h-[293px] w-[424px] border-4 border-dashed border-[purple] bg-[#e9967a] pt-[39.500px] text-center font-['Liberation_Serif',serif] text-[16.750px] leading-[19px] text-black">
      <h1 className="mx-auto w-[340px] text-[33.400px] font-bold leading-[38px] text-[gray]">Surface Area of Right cylinder</h1>
      <h3 className="mt-[21.500px] text-[19.500px] font-bold leading-[22px]">MADESWARAN (212223040106)</h3>
      <div className="mt-[20px] flex h-[19px] justify-center">
        <Field label="Radius:" value="50" width="w-[150px]" />
      </div>
      <div className="mt-[7px] flex h-[19px] justify-center">
        <Field label="Height:" value="10" width="w-[149px]" />
      </div>
      <div className="mt-[10px] flex h-[15px] justify-center">
        <button className="h-[15px] w-[58px] border border-[#767676] bg-[#efefef] p-0 font-['Liberation_Sans'] text-[11px] leading-[11px]">
          Calculate
        </button>
      </div>
      <div className="mt-[11px] flex h-[19px] justify-center">
        <Field label="Area:" value="18840.0" width="w-[149px]" />
        <span className="-mt-[6px] text-[14px]">2</span>
      </div>
    </div>
  );
}

function Sidebar() {
  return (
    <div className="flex w-[55px] shrink-0 flex-col items-center bg-[#f7f7f7]">
      <div className="flex h-[48px] items-center">
        <Copilot />
      </div>
      <div className="mr-[2px] mt-[2px] [&>div]:flex [&>div]:h-[50.200px] [&>div]:items-center [&>div]:justify-center">
        <div><SideSearch /></div>
        <div><SideTag /></div>
        <div><SideTools /></div>
        <div><SideGames /></div>
        <div><SideM365 /></div>
        <div><SideOutlook /></div>
        <div><SideDesigner /></div>
        <div><SideDrop /></div>
      </div>
      <div className="mt-[14px] h-px w-[35px] bg-[#bdbdbd]" />
      <div className="mr-[2px] mt-[31px]">
        <Plus />
      </div>
      <div className="mt-auto h-px w-[35px] bg-[#bdbdbd]" />
      <div className="mb-[17px] mt-[16px]">
        <Gear />
      </div>
    </div>
  );
}

function Tray() {
  return (
    <div className="ml-auto flex h-full items-center pb-px text-[15px] leading-5 text-white">
      <Svg w={14} h={8} vb="0 0 14 8">
        <path d="m1 7 6-6 6 6" stroke="#fff" strokeWidth="1.800" />
      </Svg>
      <div className="mb-[2px] ml-[25px] w-[32px] text-center">
        <div className="tracking-[-0.2px]">ENG</div>
        <div>IN</div>
      </div>
      <Svg w={20} h={16} vb="0 0 20 16" className="ml-[21px] block">
        <path d="M.8 6.200a13 13 0 0 1 18.400 0M3.500 9a9.200 9.200 0 0 1 13 0M6.300 11.700a5.300 5.300 0 0 1 7.400 0" stroke="#fff" strokeWidth="1.300" />
        <circle cx="10" cy="14" r="1.900" fill="#fff" />
      </Svg>
      <Svg w={20} h={16} vb="0 0 20 16" className="ml-[10px] block">
        <path d="M.8 5.300v5.200h3.300L8.500 15V1L4.100 5.300Z" stroke="#fff" strokeWidth="1.200" strokeLinejoin="round" />
        <path d="m12.300 4.800 6.500 6.500M18.800 4.800l-6.500 6.500" stroke="#fff" strokeWidth="1.300" />
      </Svg>
      <Svg w={20} h={14} vb="0 0 20 14" className="ml-[10px] block">
        <rect x=".7" y=".7" width="16" height="12.200" rx="2.500" stroke="#fff" strokeWidth="1.300" />
        <rect x="2.300" y="2.500" width="5" height="8.600" rx=".8" fill="#fff" />
        <path d="M17.500 4.500c1.600 0 2.300.8 2.300 2.300s-.7 2.300-2.300 2.300Z" fill="#fff" />
      </Svg>
      <div className="mb-[3px] ml-[18px] w-[80px] text-right tracking-[-0.130px]">
        <div>09:24</div>
        <div>04-04-2024</div>
      </div>
      <Svg w={18} h={20} vb="0 0 18 20" className="ml-[10px] block">
        <path d="M9 .5a6.500 6.500 0 0 1 6.500 6.500v4.500l1.800 3.300c.3.600 0 1.200-.7 1.200H1.400c-.7 0-1-.6-.7-1.200l1.800-3.300V7A6.500 6.500 0 0 1 9 .5ZM6 17.200h6a3 3 0 0 1-6 0Z" fill="#98ecec" />
      </Svg>
      <div className="relative ml-[22px] mr-[25px]">
        <Svg w={30} h={28} vb="0 0 32 28">
          <defs>
            <linearGradient id="pa" x1="0" y1="0" x2="0" y2="1">
              <stop offset="0" stopColor="#1b8fe8" />
              <stop offset=".5" stopColor="#4bb07c" />
              <stop offset="1" stopColor="#ffd21c" />
            </linearGradient>
            <linearGradient id="pb" x1="1" y1="0" x2="0" y2="1">
              <stop offset="0" stopColor="#a44af0" />
              <stop offset="1" stopColor="#f96a70" />
            </linearGradient>
          </defs>
          <path d="M18 0h3c2 0 3 1.500 3.500 3.500L26 8h-7l-3 2Z" fill="#1846c8" />
          <path d="M10.500 0H20c-2 0-3 1.500-3.700 3.500L12 17.500c-.8 2.400-2.200 3.500-4.500 3.500H4.800C1 21 .4 18.500 1.200 15.500l3-10.500C5.200 1.500 7 0 10.500 0Z" fill="url(#pa)" />
          <path d="M22.500 8H28c3.200 0 4 2.500 3.200 5.500l-2.700 8.500H15L20 11c.5-2 1.200-3 2.500-3Z" fill="url(#pb)" />
        </Svg>
        <span className="absolute left-[6px] top-[19px] flex h-[9.500px] w-[24px] items-center justify-center rounded-[2px] bg-[#fdc50a] text-[8.500px] font-extrabold leading-none tracking-[0.400px] text-black">
          PRE
        </span>
      </div>
    </div>
  );
}

function Taskbar() {
  return (
    <div className="flex h-[60px] shrink-0 items-center border-t border-[#2a4f5a] bg-[#123c49]">
      <div className="flex w-[305px] shrink-0 pb-px pl-[26px]">
        <Widgets />
      </div>
      <div className="flex h-full shrink-0">
        {apps.map((a) => (
          <div key={a.name} className="flex h-full w-[55.100px] shrink-0 items-center justify-center pb-px">
            <div
              className={
                a.state === "active"
                  ? "relative flex h-[50px] w-[50px] items-center justify-center rounded-[5px] border border-[#31525d] bg-[#254955]"
                  : "relative flex h-[50px] w-[50px] items-center justify-center"
              }
            >
              {a.icon}
              {a.state === "open" && <span className="absolute bottom-[1px] left-[21px] h-1 w-2 rounded-full bg-[#93a4a9]" />}
              {a.state === "active" && <span className="absolute bottom-0 left-[14px] h-1 w-5 rounded-full bg-[#72d3da]" />}
            </div>
          </div>
        ))}
      </div>
      <Tray />
    </div>
  );
}

export default function App() {
  return (
    <div className="flex h-[1080px] w-[1920px] flex-col overflow-hidden bg-[#f7f7f7] font-['Open_Sans',sans-serif]">
      <svg width="0" height="0" className="absolute">
        <defs>
          <linearGradient id="py" x1=".2" y1="0" x2=".8" y2="1">
            <stop offset=".5" stopColor="#4a8fc8" />
            <stop offset=".5" stopColor="#ffd845" />
          </linearGradient>
        </defs>
      </svg>
      <TabStrip />
      <div className="flex min-h-0 flex-1">
        <div className="flex w-[1865px] shrink-0 flex-col">
          <Toolbar />
          <div className="mb-1 ml-[5px] flex flex-1 justify-center rounded-[10px] bg-[#add8e6] pt-[215px] shadow-[0_0_3px_rgba(0,0,0,0.3)]">
            <Card />
          </div>
        </div>
        <Sidebar />
      </div>
      <Taskbar />
    </div>
  );
}
